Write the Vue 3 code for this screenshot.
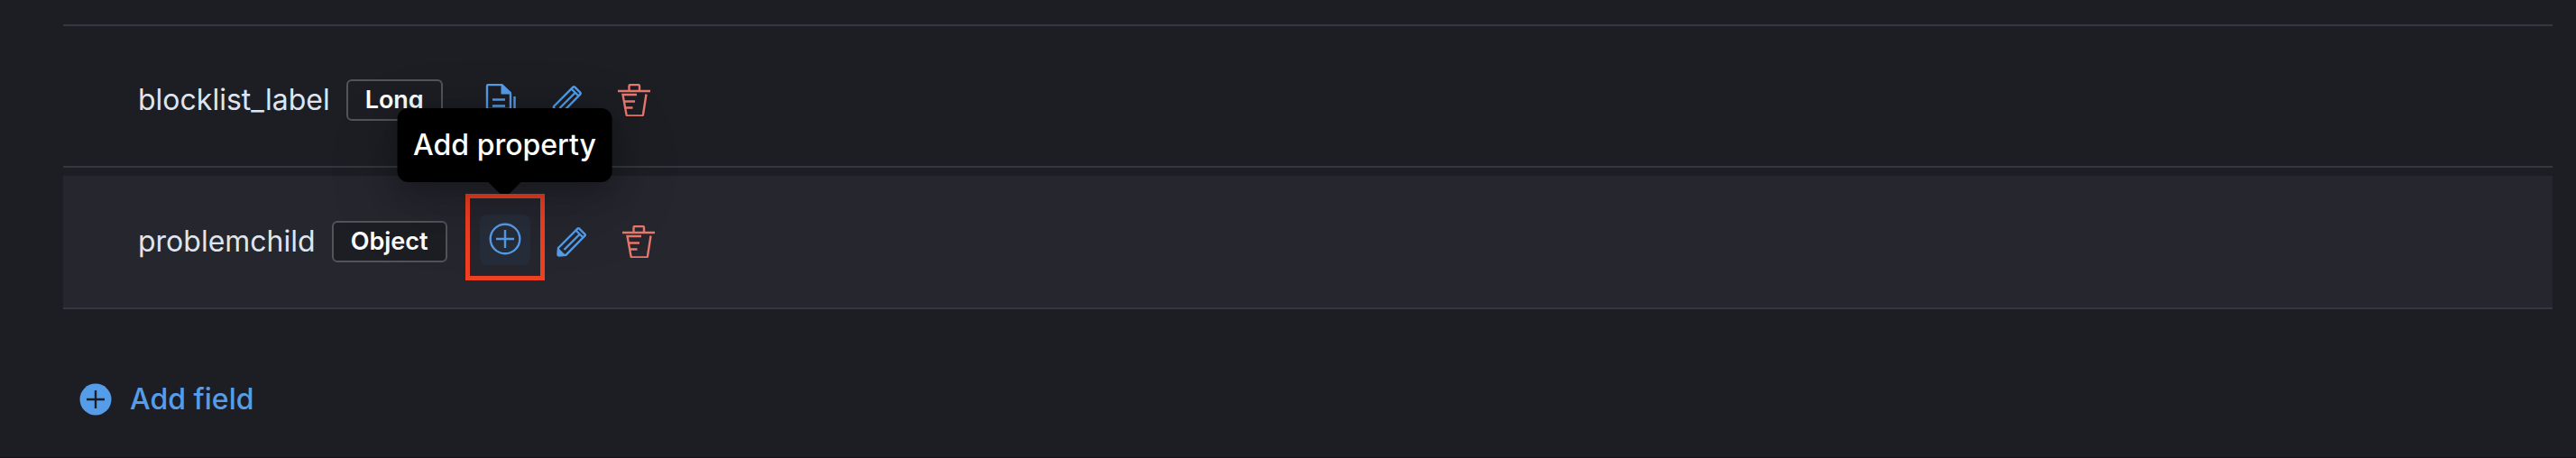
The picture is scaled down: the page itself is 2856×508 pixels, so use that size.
<script setup>
const fields = [
  { name: 'blocklist_label', type: 'Long', nested: false },
  { name: 'problemchild', type: 'Object', nested: true },
]
</script>

<template>
  <main class="mappings">
    <ul class="fields">
      <li v-for="f in fields" :key="f.name" class="field">
        <div class="row" :class="{ active: f.nested }">
          <span class="name">{{ f.name }}</span>
          <span class="badge">{{ f.type }}</span>
          <div class="actions">
            <div v-if="f.nested" class="anchor">
              <button class="icon-btn hovered" type="button" aria-label="Add property" aria-describedby="tip">
                <svg viewBox="0 0 36 36"><circle cx="18" cy="18" r="16.3" /><path d="M18 8v20M8 18h20" /></svg>
              </button>
              <span class="highlight"></span>
              <span id="tip" class="tooltip" role="tooltip">Add property</span>
            </div>
            <button v-else class="icon-btn" type="button" aria-label="Add multi-field">
              <svg viewBox="0 0 36 36">
                <path d="M19 1H4.500Q3 1 3 2.500V26.500Q3 28 4.500 28H27.500Q29 28 29 26.500V11" />
                <path class="solid" d="M18.500 0H20L30 9.500V11.500H18.500z" />
                <path d="M9 17.500h14M9 24.500h14M33.500 14V32H8" />
              </svg>
            </button>
            <button class="icon-btn" type="button" :aria-label="'Edit ' + f.name">
              <svg viewBox="0 0 36 36">
                <path d="M3 25L24.300 3.700Q25.300 2.700 26.300 3.700L32.300 9.700Q33.300 10.700 32.300 11.700L11.500 32.800L4 33.500Q2.500 33.500 2.500 32zM22.500 5.500L30.500 13.500M9.500 27L27 9.500" />
                <path class="solid" d="M2.500 24.500L11.500 33.500H4Q2.500 33.500 2.500 32z" />
              </svg>
            </button>
            <button class="icon-btn danger" type="button" :aria-label="'Remove ' + f.name">
              <svg viewBox="0 0 36 36">
                <path d="M0 8h36M12.500 8V2.500Q12.500 1 14 1H22.500Q24 1 24 2.500V8M31.500 11.500L28 34Q27.700 35.500 26.500 35.500H11Q9.800 35.500 9.500 34L5.500 12H21M7 19.500h12M8.500 26.500h8" />
              </svg>
            </button>
          </div>
        </div>
      </li>
    </ul>
    <button class="add" type="button">
      <svg viewBox="0 0 36 36"><circle cx="18" cy="18" r="17.500" /><path d="M18 8v20M8 18h20" /></svg>
      <span>Add field</span>
    </button>
  </main>
</template>

<style>
body { background: #1d1e24; }
</style>

<style scoped>
.mappings {
  box-sizing: border-box;
  min-height: 100vh;
  padding: 27px 26px 0 70px;
  border-bottom: 1px solid #19111a;
  background: #1d1e24;
  color: #dfe5ef;
  font-family: Inter, "Liberation Sans", sans-serif;
  font-size: 32px;
  line-height: 40px;
}
.fields {
  list-style: none;
  margin: 0;
  padding: 0;
  border-top: 2px solid #343741;
}
.field {
  padding-top: 9px;
  border-bottom: 2px solid #343741;
}
.row {
  display: flex;
  align-items: center;
  height: 146px;
  padding-left: 83px;
}
.row.active { background: #25262e; }
.badge {
  box-sizing: border-box;
  height: 46px;
  margin-left: 18px;
  padding: 0 19px;
  border: 2px solid #535459;
  border-radius: 6px;
  background: #1d1e24;
  color: #fff;
  font-size: 27px;
  font-weight: 600;
  line-height: 42px;
}
.actions {
  display: flex;
  gap: 18px;
  margin-left: 36px;
}
.anchor { position: relative; }
.icon-btn {
  box-sizing: border-box;
  display: flex;
  align-items: center;
  justify-content: center;
  width: 56px;
  height: 56px;
  padding: 0;
  border: 0;
  border-radius: 8px;
  background: none;
  color: #559de8;
  cursor: pointer;
}
.icon-btn.hovered {
  padding-bottom: 2px;
  background: #262d3a;
  transform: translateY(-2px);
}
.icon-btn.danger { color: #e7776c; }
svg {
  display: block;
  width: 36px;
  height: 36px;
  fill: none;
  stroke: currentColor;
  stroke-width: 2.4;
}
.solid {
  fill: currentColor;
  stroke: none;
}
.highlight {
  position: absolute;
  top: -25px;
  left: -16px;
  width: 78px;
  height: 86px;
  border: 5px solid #ee4023;
}
.tooltip {
  position: absolute;
  bottom: 94px;
  left: 50%;
  padding: 21px 18px;
  border-radius: 12px;
  background: #000;
  box-shadow: 0 6px 30px rgba(0, 0, 0, 0.25), 0 24px 80px rgba(0, 0, 0, 0.2);
  color: #fff;
  font-weight: 500;
  white-space: nowrap;
  transform: translateX(-50%);
}
.tooltip::after {
  content: "";
  position: absolute;
  top: 100%;
  left: 50%;
  width: 36px;
  height: 13px;
  margin-left: -18px;
  background: #000;
  clip-path: polygon(0 0, 100% 0, 64% 100%, 36% 100%);
}
.add {
  display: flex;
  align-items: center;
  gap: 20px;
  margin: 80px 0 0 18px;
  padding: 0;
  border: 0;
  background: none;
  color: #559de8;
  font: inherit;
  font-weight: 500;
  cursor: pointer;
}
.add circle {
  fill: currentColor;
  stroke: none;
}
.add path { stroke: #1d1e24; }
</style>
